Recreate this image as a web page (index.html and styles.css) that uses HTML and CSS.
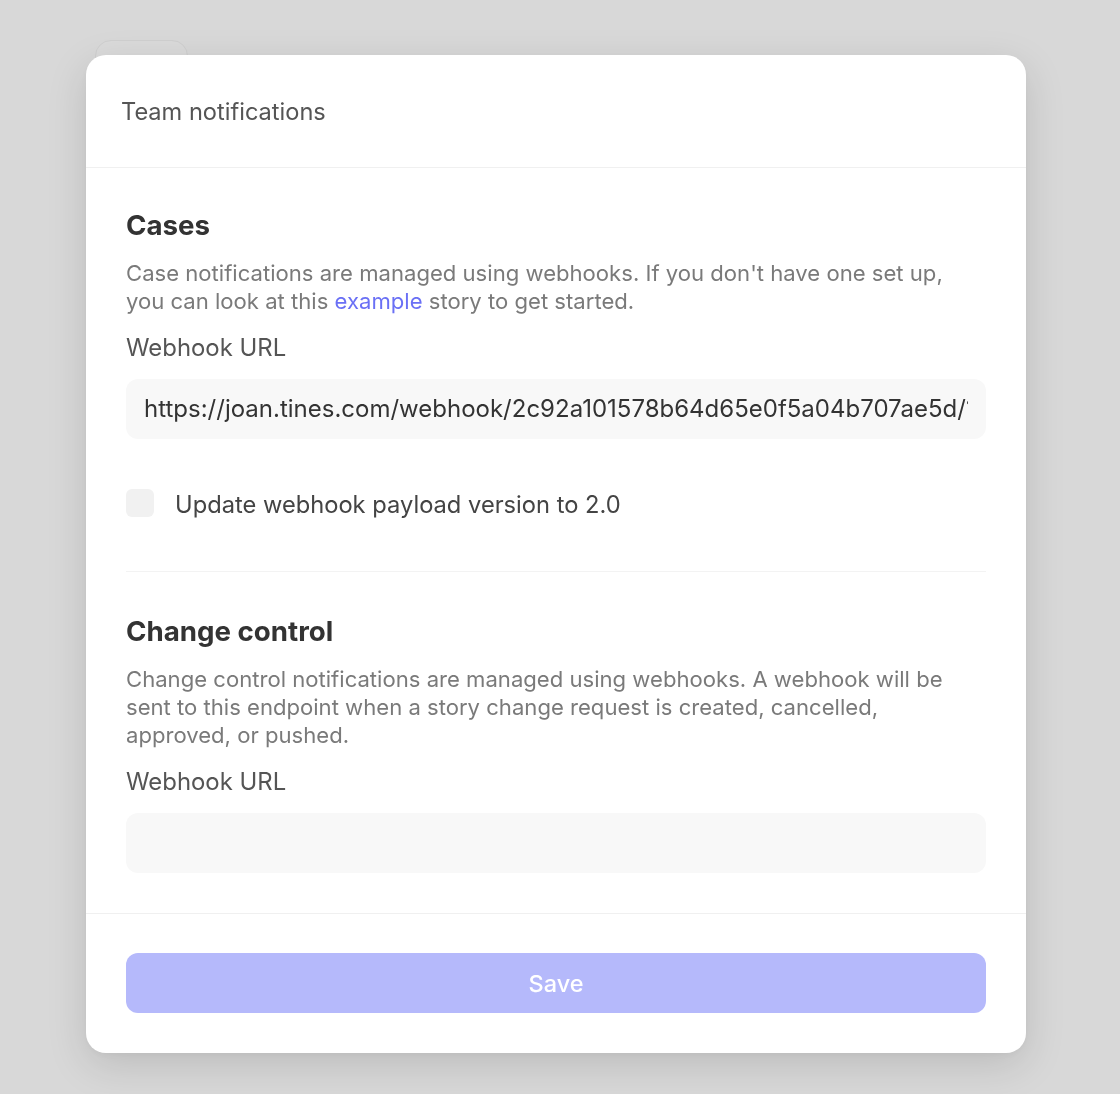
FILE: index.html
```html
<!DOCTYPE html>
<html lang="en">
<head>
<meta charset="utf-8">
<title>Team notifications</title>
<link rel="stylesheet" href="styles.css">
</head>
<body>
<div class="page">
  <button class="bg-button" type="button" tabindex="-1"></button>
</div>
<div class="overlay">
  <div class="modal" role="dialog" aria-label="Team notifications">
    <div class="modal-header">
      <h2 class="modal-title">Team notifications</h2>
    </div>
    <div class="modal-body">
      <section class="section">
        <h3 class="section-title">Cases</h3>
        <p class="section-desc">Case notifications are managed using webhooks. If you don't have one set up, you can look at this <a class="link" href="#">example</a> story to get started.</p>
        <label class="field-label">Webhook URL</label>
        <div class="input"><span class="input-value">https://joan.tines.com/webhook/2c92a101578b64d65e0f5a04b707ae5d/1</span></div>
        <label class="check-row">
          <span class="checkbox"></span>
          <span class="check-label">Update webhook payload version to 2.0</span>
        </label>
      </section>
      <hr class="divider">
      <section class="section">
        <h3 class="section-title">Change control</h3>
        <p class="section-desc">Change control notifications are managed using webhooks. A webhook will be sent to this endpoint when a story change request is created, cancelled, approved, or pushed.</p>
        <label class="field-label">Webhook URL</label>
        <div class="input"><span class="input-value"></span></div>
      </section>
    </div>
    <div class="modal-footer">
      <button class="save-button" type="button">Save</button>
    </div>
  </div>
</div>
</body>
</html>
```
FILE: styles.css
```css
* { box-sizing: border-box; }

html, body {
  margin: 0;
  padding: 0;
  height: 100%;
}

body {
  background: #d8d8d8;
  font-family: Inter, "Noto Sans", "Liberation Sans", sans-serif;
  overflow: hidden;
}

.page {
  padding: 40px 0 0 95px;
}

.bg-button {
  width: 93px;
  height: 40px;
  border: 1px solid #cfcfcf;
  border-radius: 16px;
  background: #dadada;
}

.overlay {
  position: fixed;
  inset: 0;
  display: flex;
  align-items: flex-start;
  padding: 55px 0 0 86px;
}

.modal {
  width: 940px;
  background: #ffffff;
  border-radius: 20px;
  box-shadow: 0 12px 40px rgba(0, 0, 0, 0.13), 0 2px 8px rgba(0, 0, 0, 0.04);
  overflow: hidden;
}

.modal-header {
  padding: 43px 35px 41px;
  border-bottom: 1px solid #f0f0f0;
}

.modal-title {
  margin: 0;
  font-size: 23.6px;
  line-height: 28px;
  font-weight: 400;
  color: #555555;
}

.modal-body {
  padding: 40px 40px 40px;
}

.section-title {
  margin: 0;
  font-size: 27.7px;
  line-height: 34px;
  font-weight: 700;
  color: #333333;
}

.section-desc {
  margin: 17px 0 0;
  font-size: 22.1px;
  line-height: 28px;
  color: #7a7a7a;
}

.link {
  color: #6a70f5;
  text-decoration: none;
}

.field-label {
  display: block;
  margin-top: 18px;
  font-size: 23.9px;
  line-height: 30px;
  color: #555555;
}

.input {
  margin-top: 16px;
  height: 60px;
  padding: 0 18px;
  border-radius: 12px;
  background: #f8f8f8;
  font-size: 24px;
  line-height: 60px;
  color: #333333;
}

.input-value {
  display: block;
  height: 60px;
  white-space: nowrap;
  overflow: hidden;
}

.check-row {
  display: flex;
  align-items: flex-start;
  gap: 21px;
  margin-top: 50px;
}

.checkbox {
  width: 28px;
  height: 28px;
  border-radius: 6px;
  background: #f1f1f1;
  flex: none;
}

.check-label {
  height: 28px;
  padding-top: 4px;
  font-size: 23.7px;
  line-height: 24px;
  color: #444444;
}

.divider {
  margin: 54px 0 42px;
  border: 0;
  border-top: 1px solid #f3f3f3;
}

.modal-footer {
  padding: 39px 40px 40px;
  border-top: 1px solid #f0f0f0;
}

.save-button {
  display: block;
  width: 100%;
  height: 60px;
  border: 0;
  border-radius: 12px;
  background: #b5b9fb;
  color: #ffffff;
  font-family: inherit;
  font-size: 23.5px;
  font-weight: 500;
}
```
